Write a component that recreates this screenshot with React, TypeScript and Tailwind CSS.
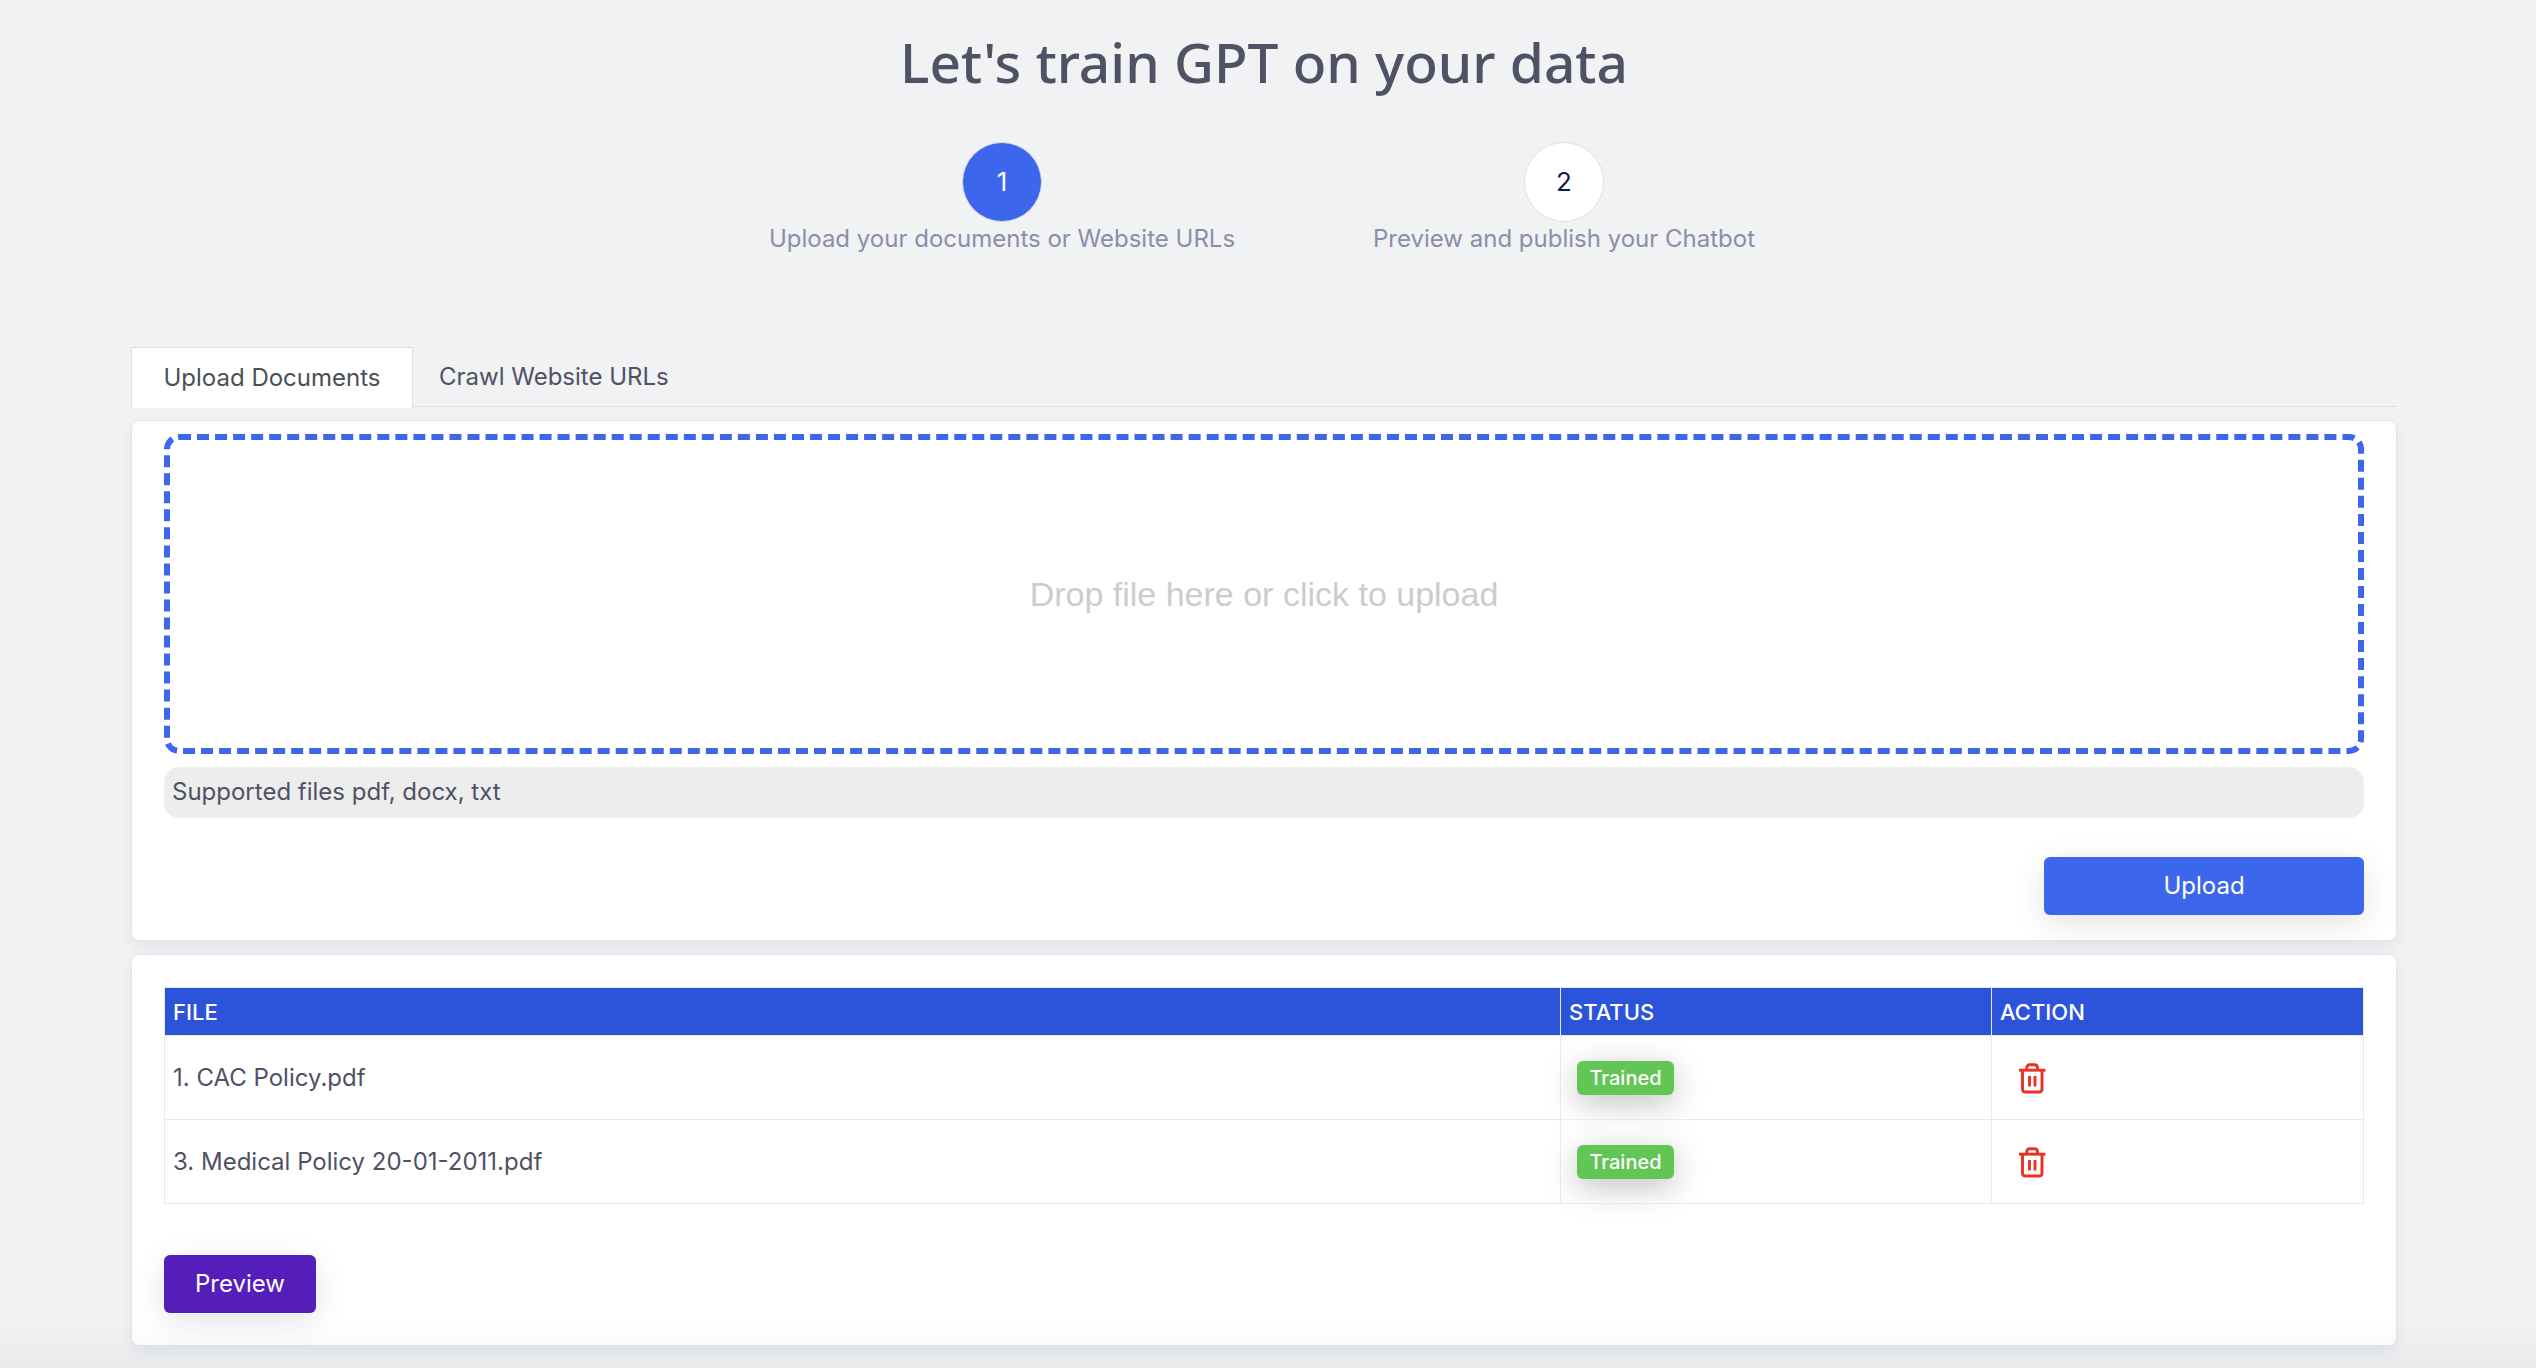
import { useState } from "react";

const steps = [
  { id: 1, label: "Upload your documents or Website URLs", active: true },
  { id: 2, label: "Preview and publish your Chatbot", active: false },
];

const files = [
  { id: 1, name: "CAC Policy.pdf", status: "Trained" },
  { id: 3, name: "Medical Policy 20-01-2011.pdf", status: "Trained" },
];

const tabs = ["Upload Documents", "Crawl Website URLs"];

function TrashIcon() {
  return (
    <svg viewBox="0 0 28 32" className="h-8 w-7" fill="none" stroke="currentColor" strokeWidth="2.9" aria-hidden="true">
      <path d="M1 8.200H27.500" />
      <path d="M8.700 8.200V6C8.700 4 9.700 2.800 11.700 2.800H16.500C18.500 2.800 19.500 4 19.500 6V8.200" />
      <path d="M4.500 8.200V27C4.500 29 5.500 30 7.300 30H21.200C23 30 24 29 24 27V8.200" />
      <path d="M11.500 14V24.500M17 14V24.500" />
    </svg>
  );
}

const card =
  "rounded-lg border border-[#e2e5ec] bg-white px-8 shadow-[0_6px_16px_rgba(18,38,63,0.06)]";

export default function App() {
  const [tab, setTab] = useState(0);
  return (
    <div className="min-h-screen bg-[#f0f2f4] pt-6 pr-[139px] pb-[22px] pl-[131px] font-['Inter',sans-serif] text-[24px] leading-[34px] text-[#505165]">
      <h1 className="text-center font-['Noto_Sans',sans-serif] text-[55px] leading-[76px] font-medium">
        Let's train GPT on your data
      </h1>

      <ol className="mt-[42px] flex justify-center gap-[120px]">
        {steps.map((s) => (
          <li
            key={s.id}
            className={
              s.active
                ? "flex w-[480px] flex-col items-center text-[#8b8ea8]"
                : "flex w-[404px] flex-col items-center text-[#8b8ea8]"
            }
          >
            <span
              className={
                s.active
                  ? "flex size-20 items-center justify-center rounded-full border border-[#d9dbe0] bg-[#3c66eb] text-[26px] text-white"
                  : "flex size-20 items-center justify-center rounded-full border border-[#dfe0e3] bg-white text-[26px] text-[#0f1c4d]"
              }
            >
              {s.id}
            </span>
            <span>{s.label}</span>
          </li>
        ))}
      </ol>

      <div role="tablist" className="mt-[91px] flex border-b border-[#dee0e6]">
        {tabs.map((name, i) => (
          <button
            key={name}
            role="tab"
            type="button"
            aria-selected={tab === i}
            onClick={() => setTab(i)}
            className={
              tab === i
                ? "-mb-0.5 h-[61px] w-[282px] border border-b-0 border-[#dee0e6] bg-white text-[#495057]"
                : "h-[59px] px-[26px]"
            }
          >
            {name}
          </button>
        ))}
      </div>

      <section className={`${card} mt-[13px] pt-[13px] pb-[25px]`}>
        <label className="flex h-80 cursor-pointer items-center justify-center rounded-[15px] border-[6px] border-dashed border-[#3c66eb] font-['Liberation_Sans',sans-serif] text-[34px] text-[#cccccc]">
          Drop file here or click to upload
          <input type="file" className="sr-only" />
        </label>
        <p className="mt-[13px] rounded-[15px] bg-[#ededed] px-2 pt-2 pb-[9px]">
          Supported files pdf, docx, txt
        </p>
        <div className="mt-[39px] flex justify-end">
          <button
            type="button"
            className="h-[58px] w-80 rounded-md bg-[#3c66eb] text-white shadow-[0_8px_32px_rgba(0,0,0,0.11)]"
          >
            Upload
          </button>
        </div>
      </section>

      <section className={`${card} mt-[13px] py-8`}>
        <table className="w-full table-fixed border-collapse text-left">
          <colgroup>
            <col />
            <col className="w-[431px]" />
            <col className="w-[372px]" />
          </colgroup>
          <thead>
            <tr className="h-12 bg-[#2b54da] text-[22px] text-white">
              {["FILE", "STATUS", "ACTION"].map((h) => (
                <th key={h} className="border border-[#e9eaf0] px-2 font-medium">
                  {h}
                </th>
              ))}
            </tr>
          </thead>
          <tbody>
            {files.map((f) => (
              <tr key={f.id} className="h-[84px]">
                <td className="border border-[#e9eaf0] px-2">
                  {f.id}. {f.name}
                </td>
                <td className="border border-[#e9eaf0] px-4">
                  <span className="flex h-[34px] w-[97px] items-center justify-center rounded-md bg-[#62c655] text-[20px] font-medium text-white shadow-[0_8px_32px_rgba(0,0,0,0.25)]">
                    {f.status}
                  </span>
                </td>
                <td className="border border-[#e9eaf0] px-[26px]">
                  <button type="button" aria-label={`Delete ${f.name}`} className="flex text-[#ea3323]">
                    <TrashIcon />
                  </button>
                </td>
              </tr>
            ))}
          </tbody>
        </table>
        <button
          type="button"
          className="mt-[51px] block h-[58px] w-[152px] rounded-md bg-[#551dba] text-white shadow-[0_8px_32px_rgba(0,0,0,0.11)]"
        >
          Preview
        </button>
      </section>

      <div className="pointer-events-none fixed inset-x-0 bottom-0 h-12 bg-linear-to-b from-transparent to-black/3" />
    </div>
  );
}
